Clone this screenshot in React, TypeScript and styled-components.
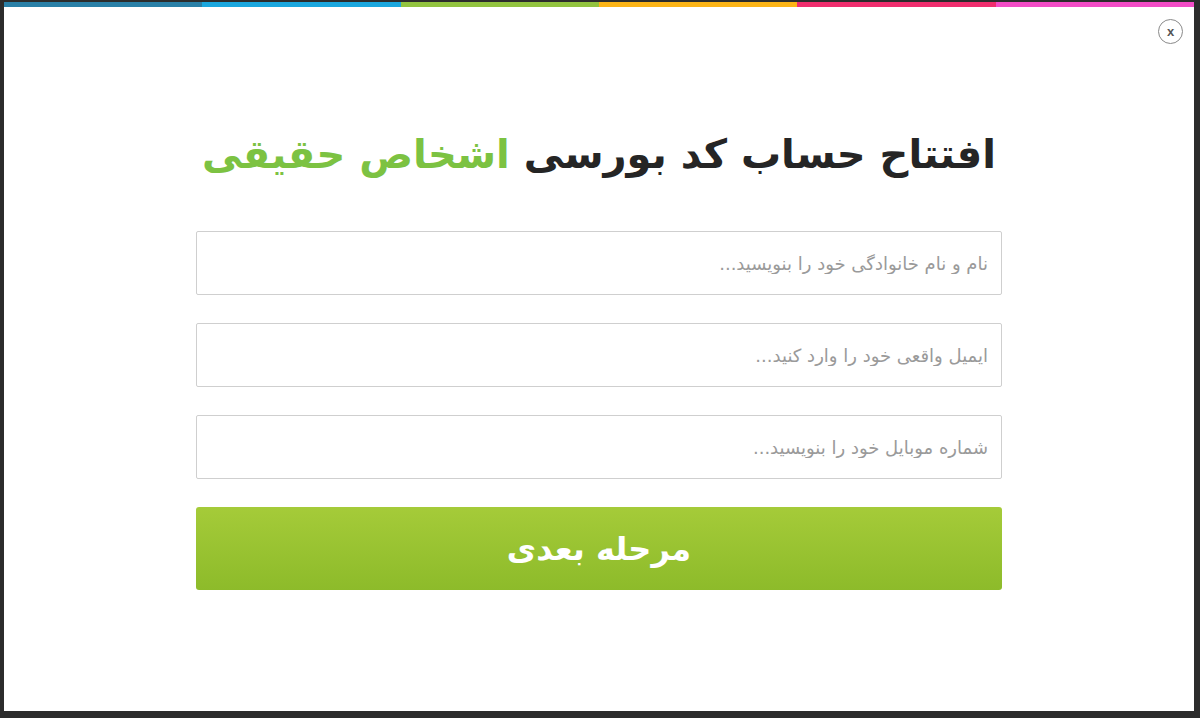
import React from 'react';
import styled, { createGlobalStyle } from 'styled-components';

const GlobalStyle = createGlobalStyle`
    html, body {
        margin: 0;
        padding: 0;
        background: #2c2c2c;
    }
    * {
        box-sizing: border-box;
    }
`;

const Overlay = styled.div`
    display: flex;
    width: 1200px;
    height: 718px;
    padding: 2px 6px 7px 4px;
`;

const Modal = styled.div`
    position: relative;
    flex: 1;
    display: flex;
    flex-direction: column;
    align-items: center;
    background: #fff;
    direction: rtl;
    font-family: 'DejaVu Sans', 'Noto Sans', sans-serif;
`;

const ColorBar = styled.div`
    display: flex;
    direction: ltr;
    width: 100%;
    height: 5px;
`;

const ColorSegment = styled.span<{ $color: string }>`
    flex: 1;
    background: ${(p) => p.$color};
`;

const CloseButton = styled.button`
    position: absolute;
    top: 17px;
    right: 11px;
    width: 25px;
    height: 25px;
    border-radius: 50%;
    border: 1px solid #8a8a8a;
    background: #fff;
    color: #555;
    font: bold 13px 'Liberation Sans', Arial, sans-serif;
    line-height: 20px;
    padding: 0;
    cursor: pointer;
`;

const Title = styled.h1`
    margin: 112px 0 0;
    font-size: 40px;
    font-weight: bold;
    color: #252525;
    line-height: 70px;
    height: 70px;
`;

const Highlight = styled.span`
    color: #7cc242;
`;

const Form = styled.form`
    display: flex;
    flex-direction: column;
    gap: 28px;
    width: 806px;
    margin-top: 42px;
`;

const Input = styled.input`
    height: 64px;
    width: 100%;
    border: 1px solid #cfcfcf;
    border-radius: 2px;
    padding: 0 13px;
    font-family: 'DejaVu Sans', sans-serif;
    font-size: 18px;
    color: #333;
    direction: rtl;
    outline: none;
    &::placeholder {
        color: #9a9a9a;
    }
`;

const SubmitButton = styled.button`
    height: 83px;
    width: 100%;
    border: none;
    border-radius: 3px;
    background: linear-gradient(to bottom, #a5cb39, #8dbb2a);
    color: #fff;
    font-family: 'DejaVu Sans', sans-serif;
    font-size: 32px;
    font-weight: bold;
    cursor: pointer;
`;

const barColors = ['#2a80a7', '#1ba7de', '#92c33f', '#fcb417', '#ef2e6e', '#f24cc6'];

const App = () => {
    return (
        <>
            <GlobalStyle />
            <Overlay>
                <Modal>
                    <ColorBar>
                        {barColors.map((c) => (
                            <ColorSegment key={c} $color={c} />
                        ))}
                    </ColorBar>
                    <CloseButton type="button">x</CloseButton>
                    <Title>
                        افتتاح حساب کد بورسی <Highlight>اشخاص حقیقی</Highlight>
                    </Title>
                    <Form onSubmit={(e) => e.preventDefault()}>
                        <Input placeholder="نام و نام خانوادگی خود را بنویسید..." />
                        <Input placeholder="ایمیل واقعی خود را وارد کنید..." />
                        <Input placeholder="شماره موبایل خود را بنویسید..." />
                        <SubmitButton type="submit">مرحله بعدی</SubmitButton>
                    </Form>
                </Modal>
            </Overlay>
        </>
    );
};

export default App;
